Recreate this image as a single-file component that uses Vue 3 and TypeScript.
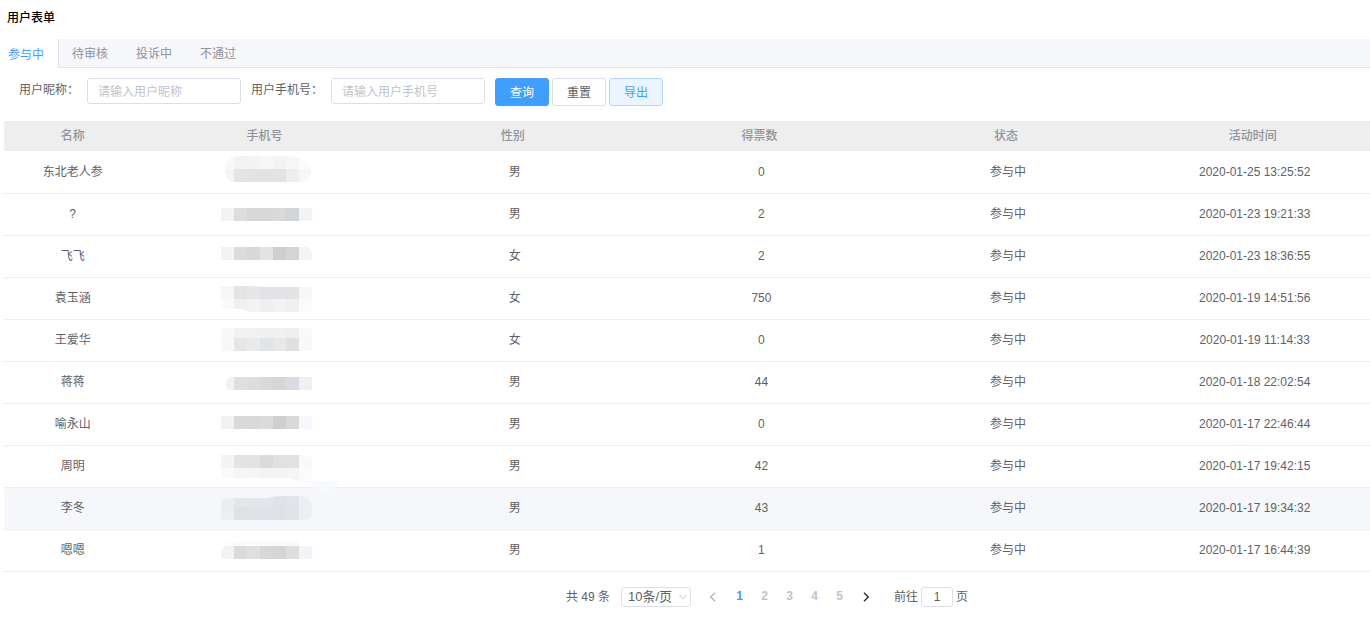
<script setup lang="ts">
import { ref } from 'vue'

interface Block {
  x: number
  y: number
  w: number
  h: number
  fill: string
}

interface Mask {
  clip: string
  blocks: Block[]
}

interface Entry {
  name: string
  gender: string
  votes: number
  time: string
  mask: Mask
}

// One strip of seven colour blocks, starting at the given top edge.
function strip(y: number, h: number, fills: string[]): Block[] {
  return fills.map((fill, i) => ({ x: 21 + i * 13, y, w: 13, h, fill }))
}

const tabs = ['参与中', '待审核', '投诉中', '不通过']
const activeTab = ref(0)
const nickname = ref('')
const phone = ref('')
const pageSize = ref(10)
const pages = [1, 2, 3, 4, 5]
const currentPage = ref(1)
const jumpTo = ref('1')

const columns = ['名称', '手机号', '性别', '得票数', '状态', '活动时间']

const entries: Entry[] = [
  {
    name: '东北老人参', gender: '男', votes: 0, time: '2020-01-25 13:25:52',
    mask: {
      clip: 'M25 18Q25 4 40 4H87Q92 6 101 6Q111 10 111 18Q111 29 101 30H34Q25 28 25 18Z',
      blocks: [
        ...strip(4, 13, ['#f8f9f9', '#f3f3f3', '#f4f4f4', '#f5f8f7', '#f3f3f3', '#f6f6f6', '#fbfcfc']),
        ...strip(17, 13, ['#f3f5f4', '#e4e4e4', '#e3e3e4', '#e0e2e4', '#e2e4e4', '#eeeeec', '#f6f7fa'])
      ]
    }
  },
  {
    name: '?', gender: '男', votes: 2, time: '2020-01-23 19:21:33',
    mask: {
      clip: 'M21 14H112V27H21Z',
      blocks: strip(14, 13, ['#f3f3f3', '#dfdddb', '#d7d7d9', '#d6d9d8', '#dadadb', '#d3d4d9', '#f2f3f6'])
    }
  },
  {
    name: '飞飞', gender: '女', votes: 2, time: '2020-01-23 18:36:55',
    mask: {
      clip: 'M21 11H106Q112 13 112 18V24H21Z',
      blocks: strip(11, 13, ['#f1f4f3', '#dedcda', '#d8d8da', '#e1e4e2', '#cecdd0', '#d5d5d5', '#f3f4f7'])
    }
  },
  {
    name: '袁玉涵', gender: '女', votes: 750, time: '2020-01-19 14:51:56',
    mask: {
      clip: 'M21 8H53L63 9H106L112 10V34H50Q44 32 42 31H30Q21 31 21 28Z',
      blocks: [
        ...strip(8, 13, ['#f5f6f6', '#e4e4e3', '#e7e7e7', '#e1e3e6', '#e3e4e7', '#e2e3e4', '#f6f7f7']),
        ...strip(21, 13, ['#fafafa', '#f0f0f0', '#f3f3f3', '#eeeff2', '#f3f3f3', '#f0f0f0', '#fbfbfb'])
      ]
    }
  },
  {
    name: '王爱华', gender: '女', votes: 0, time: '2020-01-19 11:14:33',
    mask: {
      clip: 'M21 11Q21 8 28 8H106Q112 8 112 11V31H21Z',
      blocks: [
        ...strip(8, 10, ['#f8f8f8', '#f1f1f1', '#f1f1f1', '#f0f0f0', '#f1f1f1', '#efefef', '#f9f9f9']),
        ...strip(18, 13, ['#f8f8f8', '#e7e6e4', '#e9eaec', '#e1e3e6', '#e8e8e9', '#e0e0e1', '#f9f9f9'])
      ]
    }
  },
  {
    name: '蒋蒋', gender: '男', votes: 44, time: '2020-01-18 22:02:54',
    mask: {
      clip: 'M30 15H112V28H27Q23 21 30 15Z',
      blocks: strip(15, 13, ['#f1f4f3', '#e0dfde', '#dddddf', '#d7dad9', '#d8d6d5', '#dbdce1', '#eff0f3'])
    }
  },
  {
    name: '喻永山', gender: '男', votes: 0, time: '2020-01-17 22:46:44',
    mask: {
      clip: 'M21 12H112V25H21Z',
      blocks: strip(12, 13, ['#f0f3f2', '#dadada', '#d9d8da', '#dadcdb', '#cfced1', '#d9d9d9', '#f7f8fb'])
    }
  },
  {
    name: '周明', gender: '男', votes: 42, time: '2020-01-17 19:42:15',
    mask: {
      clip: 'M21 9H98Q109 10 112 12V38Q103 36 89 32H21Z',
      blocks: [
        ...strip(9, 13, ['#f2f5f4', '#e4e4e4', '#e3e3e1', '#dbdbdd', '#e1e1e1', '#e1e1e2', '#f8f9f9']),
        ...strip(22, 16, ['#fafafa', '#f6f6f6', '#f5f5f5', '#f3f3f3', '#f3f3f3', '#f5f5f5', '#fafbfb'])
      ]
    }
  },
  {
    name: '李冬', gender: '男', votes: 43, time: '2020-01-17 19:34:32',
    mask: {
      clip: 'M21 13Q25 10 35 10H68Q73 8 83 8H99Q112 10 112 18V26Q111 31 105 32H21Z',
      blocks: [
        ...strip(8, 11, ['#ebeef1', '#e4e6e9', '#e3e6e9', '#e2e6ea', '#dfe3e9', '#e1e4e8', '#ecf0f4']),
        ...strip(19, 13, ['#ebeef2', '#dfe1e4', '#dfe1e5', '#dfe3e9', '#dfe1e4', '#e1e3e7', '#eaeff3'])
      ]
    }
  },
  {
    name: '嗯嗯', gender: '男', votes: 1, time: '2020-01-17 16:44:39',
    mask: {
      clip: 'M27 12Q34 11 40 11H99V16H112V29H21V20Z',
      blocks: [
        ...strip(11, 5, ['#fcfcfc', '#fafafa', '#fafafa', '#fafafa', '#fafafa', '#f8f8f8', '#fcfcfc']),
        ...strip(16, 13, ['#f1f4f3', '#dcdad8', '#dfdfdf', '#d6d8da', '#d3d6d5', '#dededf', '#f3f4f7'])
      ]
    }
  }
]
</script>

<template>
  <main class="page">
    <h1 class="title">用户表单</h1>

    <nav class="tabs" role="tablist">
      <button
        v-for="(tab, i) in tabs"
        :key="tab"
        type="button"
        role="tab"
        class="tab"
        :class="{ active: activeTab === i }"
        :aria-selected="activeTab === i"
        @click="activeTab = i"
      >{{ tab }}</button>
    </nav>

    <form class="filters" @submit.prevent>
      <div class="field">
        <label for="nickname">用户昵称：</label>
        <input id="nickname" v-model="nickname" type="text" placeholder="请输入用户昵称" />
      </div>
      <div class="field">
        <label for="phone">用户手机号：</label>
        <input id="phone" v-model="phone" type="text" placeholder="请输入用户手机号" />
      </div>
      <div class="actions">
        <button type="submit" class="btn primary">查询</button>
        <button type="reset" class="btn">重置</button>
        <button type="button" class="btn plain">导出</button>
      </div>
    </form>

    <div class="table-wrap">
      <table class="table">
        <colgroup>
          <col class="col-name" />
          <col />
          <col v-for="n in 4" :key="n" class="col-rest" />
        </colgroup>
        <thead>
          <tr>
            <th v-for="column in columns" :key="column" scope="col">{{ column }}</th>
          </tr>
        </thead>
        <tbody>
          <tr v-for="(entry, i) in entries" :key="entry.time" :class="{ hovered: i === 8 }">
            <td>{{ entry.name }}</td>
            <td class="masked">
              <svg width="131" height="41" viewBox="0 0 131 41" aria-hidden="true" shape-rendering="crispEdges">
                <clipPath :id="`mask-${i}`"><path :d="entry.mask.clip" /></clipPath>
                <g :clip-path="`url(#mask-${i})`">
                  <rect
                    v-for="(block, b) in entry.mask.blocks"
                    :key="b"
                    :x="block.x"
                    :y="block.y"
                    :width="block.w"
                    :height="block.h"
                    :fill="block.fill"
                  />
                </g>
                <path v-if="i === 8" d="M108 -7H139Q135 3 125 3Q115 3 108 -7Z" fill="#f8fafc" />
              </svg>
            </td>
            <td>{{ entry.gender }}</td>
            <td>{{ entry.votes }}</td>
            <td>参与中</td>
            <td>{{ entry.time }}</td>
          </tr>
        </tbody>
      </table>
    </div>

    <footer class="pagination">
      <span class="total">共 49 条</span>
      <div class="size">
        <select v-model="pageSize" aria-label="每页条数">
          <option :value="10">10条/页</option>
          <option :value="20">20条/页</option>
        </select>
        <svg class="caret" width="8" height="6" viewBox="0 0 8 6" aria-hidden="true">
          <path d="M.5 1L4 4.700L7.500 1" fill="none" stroke="#c0c4cc" />
        </svg>
      </div>
      <div class="pager">
        <button type="button" class="arrow" aria-label="上一页" disabled>
          <svg width="8" height="10" viewBox="0 0 8 10" aria-hidden="true">
            <path d="M6 .7L1.700 5L6 9.300" fill="none" stroke="#b4b8c0" stroke-width="1.500" />
          </svg>
        </button>
        <button
          v-for="page in pages"
          :key="page"
          type="button"
          class="page-number"
          :class="{ current: page === currentPage }"
          @click="currentPage = page"
        >{{ page }}</button>
        <button type="button" class="arrow" aria-label="下一页">
          <svg width="8" height="10" viewBox="0 0 8 10" aria-hidden="true">
            <path d="M2 .7L6.300 5L2 9.300" fill="none" stroke="#303133" stroke-width="1.400" />
          </svg>
        </button>
      </div>
      <label class="jump">前往<input v-model="jumpTo" type="text" inputmode="numeric" />页</label>
    </footer>
  </main>
</template>

<style>
body {
  margin: 0;
  background: #fff;
}
</style>

<style scoped>
.page {
  overflow: hidden;
  font-family: "Liberation Sans", "Noto Sans CJK SC", sans-serif;
  font-size: 12px;
  line-height: 18px;
  color: #606266;
}

button,
input,
select {
  box-sizing: border-box;
  margin: 0;
  font: inherit;
  color: inherit;
}

button {
  cursor: pointer;
}

.title {
  margin: 0;
  padding: 9px 7px 12px;
  font-size: 12px;
  font-weight: 500;
  line-height: 18px;
  color: #000;
}

.tabs {
  display: flex;
  height: 28px;
  background: #f5f7fb;
  border-bottom: 1px solid #dfe4ed;
}

.tab {
  height: 28px;
  padding: 2px 14px 0;
  border: 0;
  background: none;
  color: #909399;
}

.tab.active {
  height: 29px;
  margin-right: -1px;
  padding-left: 8px;
  border-right: 1px solid #dcdfe6;
  background: #fff;
  color: #409eff;
}

.filters {
  display: flex;
  align-items: flex-start;
  gap: 10px;
  padding: 10px 19px 15px;
}

.field {
  display: flex;
  gap: 8px;
}

.field label {
  line-height: 24px;
  white-space: nowrap;
}

.field input {
  width: 154px;
  height: 26px;
  padding: 2px 10px 0;
  border: 1px solid #dcdfe6;
  border-radius: 3px;
  background: #fff;
}

.field input::placeholder {
  color: #c0c4cc;
  opacity: 1;
}

.actions {
  display: flex;
  gap: 3px;
}

.btn {
  width: 54px;
  height: 28px;
  padding: 2px 0 0;
  border: 1px solid #dcdfe6;
  border-radius: 3px;
  background: #fff;
}

.btn.primary {
  border-color: #409eff;
  background: #409eff;
  color: #fff;
}

.btn.plain {
  border-color: #b3d8ff;
  background: #ecf5ff;
  color: #409eff;
}

.table-wrap {
  margin: 0 -8px 0 4px;
}

.table {
  width: 100%;
  table-layout: fixed;
  border-collapse: separate;
  border-spacing: 0;
  text-align: center;
}

.col-name {
  width: 10%;
}

.col-rest {
  width: 17.95%;
}

th {
  height: 30px;
  padding: 0 4px 0 0;
  border-bottom: 1px solid #fff;
  background: #eee;
  background-clip: padding-box;
  font-weight: 500;
  color: #909399;
}

th:first-child {
  padding: 0;
}

td {
  height: 39px;
  padding: 0 0 2px;
  border-bottom: 1px solid #ebeef5;
}

td.masked {
  height: 41px;
  padding: 0 2px 0 0;
}

.hovered td {
  background: #f5f7fa;
}

.masked svg {
  display: block;
  margin: 0 auto;
  overflow: visible;
}

.pagination {
  display: flex;
  justify-content: center;
  align-items: center;
  height: 20px;
  padding: 15px 0 10px 164px;
}

.total {
  margin-right: 11px;
}

.size {
  display: flex;
  align-items: center;
  position: relative;
}

.size select {
  width: 70px;
  height: 20px;
  padding: 0 0 0 6px;
  border: 1px solid #dcdfe6;
  border-radius: 3px;
  appearance: none;
  background: #fff;
  font-size: 13px;
}

.caret {
  position: absolute;
  right: 4px;
  pointer-events: none;
}

.pager {
  display: flex;
  align-items: center;
  margin: 0 14px 0 8px;
}

.pager button {
  display: flex;
  justify-content: center;
  align-items: center;
  width: 25px;
  height: 20px;
  padding: 0;
  border: 0;
  background: none;
  font-weight: 700;
  color: #c0c4cc;
}

.pager .arrow {
  width: 28px;
}

.pager .page-number {
  padding-bottom: 2px;
}

.pager .current {
  color: #409eff;
}

.jump {
  display: flex;
  align-items: center;
  gap: 3px;
}

.jump input {
  width: 32px;
  height: 20px;
  padding: 0;
  border: 1px solid #dcdfe6;
  border-radius: 3px;
  background: #fff;
  font-size: 12px;
  text-align: center;
}
</style>
